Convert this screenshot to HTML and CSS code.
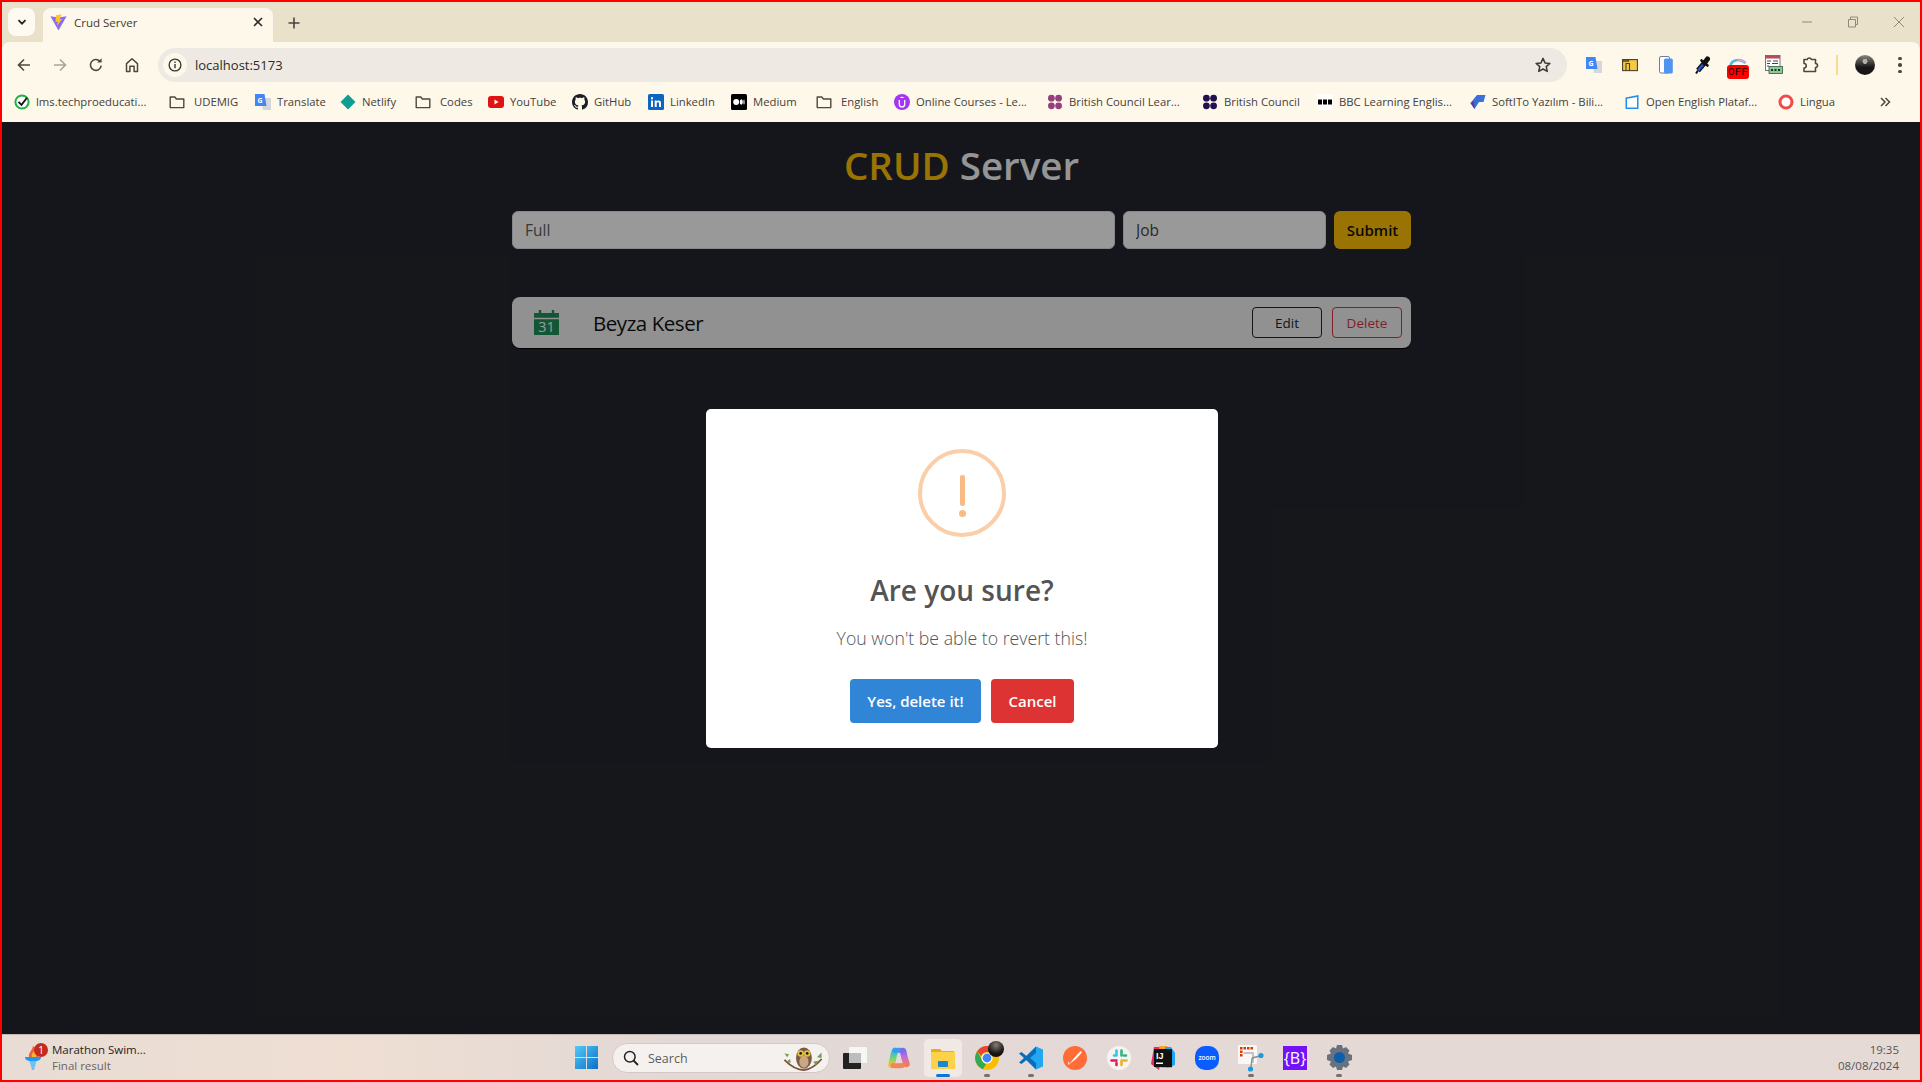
FILE: index.html
```html
<!DOCTYPE html>
<html lang="en">
<head>
<meta charset="UTF-8">
<title>Crud Server</title>
<link rel="stylesheet" href="styles.css">
</head>
<body>
<svg class="defs" width="0" height="0">
    <symbol id="folder" viewBox="0 0 16 16"><path d="M1.2 3h4.6l1.6 2h7.4v8.6H1.2z" fill="none" stroke="#4d483f" stroke-width="1.4" stroke-linejoin="round"/></symbol>
    <symbol id="dots4" viewBox="0 0 16 16"><circle cx="4.4" cy="4.2" r="3.4"/><circle cx="11.6" cy="4.2" r="3.4"/><circle cx="4.4" cy="11.8" r="3.4"/><circle cx="11.6" cy="11.8" r="3.4"/></symbol>
</svg>
<div class="frame">
    <div class="tabstrip">
        <div class="tab-search"><svg width="12" height="12" viewBox="0 0 12 12"><path d="M2.5 4.2 6 7.7l3.5-3.5" fill="none" stroke="#222" stroke-width="1.8"/></svg></div>
        <div class="tab">
            <svg class="tab-icon" width="17" height="17" viewBox="0 0 17 17"><path d="M.4 2.2 8.5 16.4 16.6 2.2l-8 1.4z" fill="#8b6cf6"/><path d="M11.5.3 6 1.3 5.6 8l2.2-.5-.5 4.5L12 4.8l-2.4.4z" fill="#ffc41f"/></svg>
            <span class="tab-title">Crud Server</span>
            <svg class="tab-close" width="12" height="12" viewBox="0 0 12 12"><path d="m2 2 8 8M10 2l-8 8" stroke="#2a2a2a" stroke-width="1.6"/></svg>
        </div>
        <svg class="new-tab" width="14" height="14" viewBox="0 0 14 14"><path d="M7 1.5v11M1.5 7h11" stroke="#4a463c" stroke-width="1.6"/></svg>
        <div class="window-controls">
            <svg width="12" height="12" viewBox="0 0 12 12"><path d="M1 6h10" stroke="#8f8a7c" stroke-width="1"/></svg>
            <svg width="12" height="12" viewBox="0 0 12 12"><path d="M1.5 3.5h7V11h-7zM3.5 3.5V1h7v7.5h-2" fill="none" stroke="#8f8a7c" stroke-width="1"/></svg>
            <svg width="12" height="12" viewBox="0 0 12 12"><path d="m1 1 10 10M11 1 1 11" stroke="#8f8a7c" stroke-width="1"/></svg>
        </div>
    </div>

    <div class="toolbar">
        <div class="nav-btn"><svg width="16" height="16" viewBox="0 0 16 16"><path d="M14 8H2.5M8 2.5 2.5 8 8 13.5" fill="none" stroke="#4d483f" stroke-width="1.6"/></svg></div>
        <div class="nav-btn"><svg width="16" height="16" viewBox="0 0 16 16"><path d="M2 8h11.5M8 2.5 13.5 8 8 13.5" fill="none" stroke="#a9a597" stroke-width="1.6"/></svg></div>
        <div class="nav-btn"><svg width="16" height="16" viewBox="0 0 16 16"><path d="M13.2 8.6a5.4 5.4 0 1 1-1.3-4.2" fill="none" stroke="#4d483f" stroke-width="1.6"/><path d="M13.6 1.2v4.4H9.2z" fill="#4d483f"/></svg></div>
        <div class="nav-btn"><svg width="16" height="16" viewBox="0 0 16 16"><path d="M2.5 14.5V6.6L8 1.8l5.5 4.8v7.9h-3.4V9.2H5.9v5.3z" fill="none" stroke="#4d483f" stroke-width="1.5" stroke-linejoin="round"/></svg></div>
        <div class="omnibox">
            <span class="site-info"><svg width="14" height="14" viewBox="0 0 14 14"><circle cx="7" cy="7" r="5.9" fill="none" stroke="#333" stroke-width="1.3"/><path d="M7 6v4.2M7 3.6v1.3" stroke="#333" stroke-width="1.4"/></svg></span>
            <span class="url">localhost:5173</span>
            <svg class="star" width="16" height="16" viewBox="0 0 16 16"><path d="m8 1.4 2 4.5 4.9.5-3.7 3.2 1.1 4.8L8 12l-4.3 2.4 1.1-4.8-3.7-3.2L6 5.9z" fill="none" stroke="#3c3a33" stroke-width="1.5" stroke-linejoin="round"/></svg>
        </div>
        <div class="ext-btn"><svg width="16" height="16" viewBox="0 0 16 16"><path d="M6 4h10v12H8z" fill="#d5d7d8"/><path d="M0 0h9.5l2 12H0z" fill="#4285f4"/><text x="5" y="8.5" class="gtrans-text">G</text></svg></div>
        <div class="ext-btn"><svg width="16" height="14" viewBox="0 0 16 14"><rect x=".6" y="1.6" width="14.8" height="11" fill="#f6c945" stroke="#4a4030" stroke-width="1.1"/><path d="M.6 1.6h6v1.5h-6zM4 12.5v-7h3.5v7" fill="none" stroke="#4a4030" stroke-width="1.1"/></svg></div>
        <div class="ext-btn"><svg width="14" height="18" viewBox="0 0 14 18"><rect x=".5" y=".5" width="10" height="16.5" rx="1.5" fill="#fff" stroke="#5f6f8c" stroke-width=".9"/><rect x="5" y="2.5" width="8.8" height="15" rx="1.5" fill="#4f94ef"/></svg></div>
        <div class="ext-btn"><svg width="15" height="18" viewBox="0 0 15 18"><path d="M9 7.5 3 14.5" stroke="#111" stroke-width="5"/><path d="M9 7.5 3 14.5" stroke="#2a55c8" stroke-width="2.6"/><path d="M3 14.5 1 17.5" stroke="#111" stroke-width="2"/><path d="m6.5 4.5 6 5" stroke="#111" stroke-width="2.6" stroke-linecap="round"/><path d="m9.5 7 3-4" stroke="#111" stroke-width="5" stroke-linecap="round"/></svg></div>
        <div class="ext-btn ext-off">
            <svg class="ext-off-arc" width="18" height="7" viewBox="0 0 18 7"><path d="M1.5 7C3 2 10 0 16.5 5" fill="none" stroke="#5ab4e0" stroke-width="2.4"/><path d="M9 2c3-.6 5.5.5 7.5 3" fill="none" stroke="#c9a8d8" stroke-width="2.4"/></svg>
            <span class="off-badge">OFF</span>
        </div>
        <div class="ext-btn"><svg width="18" height="20" viewBox="0 0 18 20"><rect x=".5" y=".5" width="14.5" height="15" fill="#fff" stroke="#555" stroke-width=".8"/><rect x=".5" y=".5" width="14.5" height="3" fill="#b84a5c"/><path d="M2 6h4M8 6h5M2 8.5h3M7 8.5h6M2 11h2" stroke="#444" stroke-width="1"/><rect x="4" y="11.5" width="13.5" height="7" fill="#8fc79a" stroke="#2f5a3a" stroke-width=".8"/><path d="M6 15h2M9.5 15h2M13 15h2" stroke="#1e3a25" stroke-width="2"/></svg></div>
        <div class="ext-btn"><svg width="18" height="18" viewBox="0 0 18 18"><path d="M3 3.5h3.2a2.2 2.2 0 0 1 4.2 0h4.1v4a2 2 0 0 1 0 4v4H3V12a2.200 2.200 0 0 0 0-4.500z" fill="none" stroke="#4d483f" stroke-width="1.6" stroke-linejoin="round"/></svg></div>
        <span class="toolbar-divider"></span>
        <span class="avatar"></span>
        <div class="menu-dots"><i></i><i></i><i></i></div>
    </div>

    <div class="bookmarks">
        <span class="bm"><svg width="16" height="16" viewBox="0 0 16 16"><circle cx="8" cy="8" r="6.6" fill="#fff" stroke="#1fb141" stroke-width="2"/><path d="m4.5 7.8 3 3 5.5-7" fill="none" stroke="#111" stroke-width="1.8"/></svg>lms.techproeducati...</span>
        <span class="bm bm-folder"><svg width="16" height="16"><use href="#folder"/></svg>UDEMIG</span>
        <span class="bm"><svg width="16" height="16" viewBox="0 0 16 16"><path d="M6 4h10v12H8z" fill="#d5d7d8"/><path d="M0 0h9.5l2 12H0z" fill="#4285f4"/><text x="5" y="8.5" class="gtrans-text">G</text></svg>Translate</span>
        <span class="bm"><svg width="16" height="16" viewBox="0 0 16 16"><path d="M8 .5 15.5 8 8 15.5.5 8z" fill="#0f9d92"/></svg>Netlify</span>
        <span class="bm bm-folder"><svg width="16" height="16"><use href="#folder"/></svg>Codes</span>
        <span class="bm"><svg width="16" height="16" viewBox="0 0 16 16"><rect y="2" width="16" height="12" rx="3" fill="#e01313"/><path d="m6.5 5.5 4 2.5-4 2.5z" fill="#fff"/></svg>YouTube</span>
        <span class="bm"><svg width="16" height="16" viewBox="0 0 16 16"><path d="M8 0C3.58 0 0 3.58 0 8c0 3.54 2.29 6.53 5.47 7.59.4.07.55-.17.55-.38 0-.19-.01-.82-.01-1.49-2.01.37-2.53-.49-2.69-.94-.09-.23-.48-.94-.82-1.13-.28-.15-.68-.52-.01-.53.63-.01 1.08.58 1.23.82.72 1.21 1.87.87 2.33.66.07-.52.28-.87.51-1.07-1.78-.2-3.64-.89-3.64-3.95 0-.87.31-1.59.82-2.15-.08-.2-.36-1.02.08-2.12 0 0 .67-.21 2.2.82.64-.18 1.32-.27 2-.27.68 0 1.36.09 2 .27 1.53-1.04 2.2-.82 2.2-.82.44 1.1.16 1.92.08 2.12.51.56.82 1.27.82 2.15 0 3.07-1.87 3.75-3.65 3.95.29.25.54.73.54 1.48 0 1.07-.01 1.93-.01 2.2 0 .21.15.46.55.38A8.013 8.013 0 0016 8c0-4.42-3.58-8-8-8z" fill="#1b1f23"/></svg>GitHub</span>
        <span class="bm"><svg width="16" height="16" viewBox="0 0 16 16"><rect width="16" height="16" rx="1.5" fill="#0a66c2"/><path d="M3 6.500h2V13H3zM3 3.200h2v2H3zM6.700 6.500h1.900v.9c.9-1.400 4.400-1.700 4.400 1.500V13h-2V9.500c0-1.700-2.300-1.500-2.300 0V13h-2z" fill="#fff"/></svg>LinkedIn</span>
        <span class="bm"><svg width="16" height="16" viewBox="0 0 16 16"><rect width="16" height="16" rx="1.5" fill="#000"/><circle cx="5.2" cy="8" r="3" fill="#fff"/><ellipse cx="10.3" cy="8" rx="1.5" ry="2.8" fill="#fff"/><ellipse cx="13" cy="8" rx=".6" ry="2.5" fill="#fff"/></svg>Medium</span>
        <span class="bm bm-folder"><svg width="16" height="16"><use href="#folder"/></svg>English</span>
        <span class="bm"><svg width="16" height="16" viewBox="0 0 16 16"><circle cx="8" cy="8" r="8" fill="#a435f0"/><path d="M5.3 6v4.2a2.700 2.700 0 0 0 5.400 0V6" fill="none" stroke="#fff" stroke-width="1.3"/><path d="M8 2.500 10.500 4h-5z" fill="#fff"/></svg>Online Courses - Le...</span>
        <span class="bm"><svg class="bc-light" width="16" height="16"><use href="#dots4"/></svg>British Council Lear...</span>
        <span class="bm"><svg class="bc-dark" width="16" height="16"><use href="#dots4"/></svg>British Council</span>
        <span class="bm"><svg width="16" height="16" viewBox="0 0 16 16"><rect width="16" height="16" fill="#fff"/><path d="M1 5.500h4v5H1zM6 5.500h4v5H6zM11 5.500h4v5h-4z" fill="#000"/></svg>BBC Learning Englis...</span>
        <span class="bm"><svg width="16" height="16" viewBox="0 0 16 16"><path d="M.5 9 7 1h8.500l-2 7H9l-4.500 7z" fill="#3d6fd8"/><path d="M.5 9 4 7l.5 8z" fill="#5a3aa0"/></svg>SoftITo Yazılım - Bili...</span>
        <span class="bm"><svg width="16" height="16" viewBox="0 0 16 16"><path d="M1.500 3.500 14.500 1v14h-13z" fill="#1e8ef0"/><path d="M3 4.800 13 3v10.500H3z" fill="#fff"/></svg>Open English Plataf...</span>
        <span class="bm"><svg width="16" height="16" viewBox="0 0 16 16"><circle cx="8" cy="8" r="6" fill="#fff" stroke="#ef4b4b" stroke-width="3"/></svg>Lingua</span>
        <svg class="bm-more" width="12" height="12" viewBox="0 0 12 12"><path d="m2 2 4 4-4 4M6.500 2l4 4-4 4" fill="none" stroke="#4d483f" stroke-width="1.5"/></svg>
    </div>

    <main class="page">
        <div class="container">
            <h1 class="app-title"><span class="title-accent">CRUD</span> Server</h1>
            <form class="add-form">
                <input class="field field-name" type="text" placeholder="Full">
                <input class="field field-job" type="text" placeholder="Job">
                <button class="btn-submit" type="button">Submit</button>
            </form>
            <div class="item">
                <svg class="item-icon" width="25" height="25" viewBox="0 0 26 26"><path d="M0 3h5V0h2.500v3h11V0H21v3h5v5H0zM0 9.500h26V26H0z" fill="#1f8f5a"/><text x="13" y="23" class="item-icon-text">31</text></svg>
                <span class="item-name">Beyza Keser</span>
                <button class="btn-line btn-edit" type="button">Edit</button>
                <button class="btn-line btn-delete" type="button">Delete</button>
            </div>
        </div>

        <div class="overlay">
            <div class="dialog">
                <div class="dialog-icon"><span class="mark-line"></span><span class="mark-dot"></span></div>
                <h2 class="dialog-title">Are you sure?</h2>
                <p class="dialog-text">You won't be able to revert this!</p>
                <div class="dialog-actions">
                    <button class="btn-confirm" type="button">Yes, delete it!</button>
                    <button class="btn-cancel" type="button">Cancel</button>
                </div>
            </div>
        </div>
    </main>

    <div class="taskbar">
        <div class="widget">
            <div class="widget-icon">
                <svg width="16" height="24" viewBox="0 0 16 24"><path d="M4 11C3 7 7 5 8 0c3 2 6 6 5 11z" fill="#f0613a"/><path d="M7 11c-1-3 1-4 2-6 2 2 3 4 2 6z" fill="#f9b233"/><path d="M0 11h16c0 3-3 4-5 4H5c-2 0-5-1-5-4z" fill="#1e9bf0"/><path d="M4.500 15h7L9 24H7z" fill="#6fc1f5"/></svg>
                <span class="widget-badge">1</span>
            </div>
            <div class="widget-text">
                <span class="widget-title">Marathon Swim...</span>
                <span class="widget-sub">Final result</span>
            </div>
        </div>
        <div class="start"><svg width="23" height="23" viewBox="0 0 23 23"><defs><linearGradient id="winblue" x1="0" y1="0" x2="1" y2="1"><stop offset="0" stop-color="#52c9f8"/><stop offset="1" stop-color="#0a6fc9"/></linearGradient></defs><path d="M0 0h11v11H0zM12 0h11v11H12zM0 12h11v11H0zM12 12h11v11H12z" fill="url(#winblue)"/></svg></div>
        <div class="search">
            <svg width="16" height="16" viewBox="0 0 16 16"><circle cx="6.8" cy="6.8" r="5.3" fill="none" stroke="#222" stroke-width="1.5"/><path d="m10.500 10.500 4.500 4.500" stroke="#222" stroke-width="1.8"/></svg>
            <span class="search-label">Search</span>
            <svg class="search-owl" width="44" height="26" viewBox="0 0 46 28"><path d="M3 15c8 8 14 11 21 11 8-1 14-6 19-12" fill="none" stroke="#7a5238" stroke-width="2"/><path d="M6 12 3 8l5 1zM10 18l-5-1 4-3zM38 12l5-5v6zM34 17l5-1-2 5z" fill="#6ea24c"/><ellipse cx="24" cy="13" rx="8.5" ry="11.5" fill="#7a5a42"/><ellipse cx="24" cy="17" rx="5" ry="6.5" fill="#c9a684"/><circle cx="20.5" cy="8" r="3.5" fill="#e5c23c"/><circle cx="27.5" cy="8" r="3.5" fill="#e5c23c"/><circle cx="20.5" cy="8" r="1.5" fill="#222"/><circle cx="27.5" cy="8" r="1.5" fill="#222"/></svg>
        </div>
        <div class="tb-app"><svg width="24" height="22" viewBox="0 0 24 22"><rect x="6" width="18" height="16" rx="1" fill="#f6f6f6"/><rect y="6" width="18" height="16" rx="1" fill="#222"/><rect x="6" y="6" width="12" height="10" fill="#bdbdbd"/></svg></div>
        <div class="tb-app"><svg width="22" height="22" viewBox="0 0 22 22"><defs><linearGradient id="copA" x1="0" y1="0" x2="0" y2="1"><stop offset="0" stop-color="#2fb6f0"/><stop offset=".55" stop-color="#7ad66a"/><stop offset="1" stop-color="#f5c13c"/></linearGradient><linearGradient id="copB" x1="0" y1="0" x2="0" y2="1"><stop offset="0" stop-color="#7a6bf0"/><stop offset=".5" stop-color="#c86bd8"/><stop offset="1" stop-color="#f27a5c"/></linearGradient></defs><path d="M7 4C5 8 5 14 3.500 18" fill="none" stroke="url(#copA)" stroke-width="6.5" stroke-linecap="round"/><path d="M7 3.500c2-.3 5-.3 7 0" fill="none" stroke="#3a9bf0" stroke-width="5" stroke-linecap="round"/><path d="M15 4c1 5 2 9 3.500 13" fill="none" stroke="url(#copB)" stroke-width="6.5" stroke-linecap="round"/><path d="M5 18.500c3 .3 6 .3 9 0" fill="none" stroke="#f2855c" stroke-width="5" stroke-linecap="round"/></svg></div>
        <div class="tb-app tb-active running-blue"><svg width="24" height="22" viewBox="0 0 24 22"><path d="M0 3a1 1 0 0 1 1-1h8l2 2h12v17H0z" fill="#e8ad1c"/><path d="M0 5h24v17H0z" fill="#fbd24a"/><rect x="7" y="14" width="10" height="6" rx="1" fill="#1b86d6"/></svg></div>
        <div class="tb-app running">
            <svg width="24" height="24" viewBox="0 0 24 24"><circle cx="12" cy="12" r="12" fill="#fbbc04"/><path d="M12 0a12 12 0 0 1 10.400 6H12a6 6 0 0 0-5.700 4.200L2.300 5.100A12 12 0 0 1 12 0z" fill="#ea4335"/><path d="M2.300 5.100 7.200 14.500A6 6 0 0 0 11 17.900L8 23.300A12 12 0 0 1 2.300 5.100z" fill="#34a853"/><circle cx="12" cy="12" r="5.6" fill="#fff"/><circle cx="12" cy="12" r="4.4" fill="#4285f4"/></svg>
            <span class="chrome-badge"></span>
        </div>
        <div class="tb-app running"><svg width="24" height="24" viewBox="0 0 24 24"><path d="M17 .5 24 3.500v17L17 23.500 5 12z" fill="#22a7f0"/><path d="M17 .5 7.500 10l-5-4L0 7.500 5 12 0 16.500 2.500 18l5-4 9.500 9.500V17l-6-5 6-5z" fill="#0a6db8"/></svg></div>
        <div class="tb-app"><svg width="24" height="24" viewBox="0 0 24 24"><circle cx="12" cy="12" r="12" fill="#ff6c37"/><path d="M6 18.500 12 11l5-5.500c1-.8 2.200.3 1.500 1.400l-5 5.600z" fill="#fff"/><path d="M6 18.500 5.500 16" stroke="#fff" stroke-width="1"/></svg></div>
        <div class="tb-app"><svg width="24" height="24" viewBox="0 0 24 24"><circle cx="12" cy="12" r="12" fill="#f6f3f1"/><path d="M9.500 4.500v5M7 9.500h2.500" stroke="#36c5f0" stroke-width="2.6" stroke-linecap="round"/><path d="M14.500 4.500v5M19 9.500h-2" stroke="#2eb67d" stroke-width="2.6" stroke-linecap="round"/><path d="M9.500 14.500h-5M9.500 17v2" stroke="#e01e5a" stroke-width="2.6" stroke-linecap="round"/><path d="M14.500 14.500h5M14.500 14.500V19" stroke="#ecb22e" stroke-width="2.6" stroke-linecap="round"/></svg></div>
        <div class="tb-app"><svg width="24" height="24" viewBox="0 0 24 24"><path d="M3 1h10L8 24l-8-6z" fill="#f0265f"/><path d="M8 0h8l8 8-3 14H10z" fill="#f9a12e"/><path d="M14 1h6l4 6v12l-8 3z" fill="#1aa6f0"/><rect x="3" y="3" width="18" height="18" fill="#111"/><text x="5" y="13" class="ij-text">IJ</text><rect x="5" y="16.5" width="7" height="1.5" fill="#fff"/></svg></div>
        <div class="tb-app"><svg width="24" height="24" viewBox="0 0 24 24"><rect width="24" height="24" rx="10" fill="#0b5cff"/><text x="12" y="14" class="zoom-text">zoom</text></svg></div>
        <div class="tb-app running"><svg width="26" height="28" viewBox="0 0 26 28"><rect y="1" width="19" height="19" rx="1.5" fill="#f8f8f8"/><path d="M2 3h2.500v2.500H2zM5.500 3H8v2.500H5.500zM9 3h2.500v2.500H9zM12.500 3H15v2.500h-2.500zM2 6.500h2.500V9H2zM2 10h2.500v2.500H2z" fill="#d83b01"/><path d="M5.500 9H15v10" fill="none" stroke="#c4c4c4" stroke-width="2"/><path d="m14 14 8-2M14 14l-1 9" stroke="#8a8a8a" stroke-width="1.3"/><circle cx="23" cy="11.5" r="2.6" fill="#1a9bdf"/><circle cx="12.5" cy="25" r="2.6" fill="#1a9bdf"/></svg></div>
        <div class="tb-app"><svg width="24" height="24" viewBox="0 0 24 24"><rect width="24" height="24" fill="#7510f7"/><text x="12" y="17.500" class="bs-text">{B}</text></svg></div>
        <div class="tb-app running"><svg width="25" height="25" viewBox="0 0 25 25"><path d="M10 0h5l1 3.500 3-1.500 3.500 3.500L21 8.500l4 1.500v5l-4 1.500 1.500 3-3.500 3.500-3-1.500L15 25h-5l-1-3.500-3 1.500-3.500-3.500L4 16.500 0 15v-5l4-1.500-1.500-3L6 2l3 1.500z" fill="#68727e"/><circle cx="12.5" cy="12.5" r="5.5" fill="#0c5fa8"/></svg></div>
        <div class="clock">
            <span>19:35</span>
            <span>08/08/2024</span>
        </div>
    </div>
</div>
</body>
</html>
```

FILE: styles.css
```css
* {
    box-sizing: border-box;
}
html, body {
    margin: 0;
    height: 100%;
}
body {
    font-family: 'Open Sans', 'Noto Sans', sans-serif;
    overflow: hidden;
}
.defs {
    position: absolute;
}
.gtrans-text {
    font: bold 7px 'Open Sans', sans-serif;
    fill: #fff;
    text-anchor: middle;
}
.frame {
    width: 1922px;
    height: 1082px;
    border: 2px solid #f00;
    display: flex;
    flex-direction: column;
    background: #e9e1c9;
}

/* tabs */
.tabstrip {
    height: 40px;
    flex: none;
    display: flex;
    align-items: flex-start;
    padding: 6px 0 0 6px;
}
.tab-search {
    width: 27px;
    height: 28px;
    background: #fffaf1;
    border-radius: 8px;
    display: flex;
    align-items: center;
    justify-content: center;
}
.tab {
    width: 230px;
    height: 34px;
    margin-left: 8px;
    background: #fef8ea;
    border-radius: 8px 8px 0 0;
    display: flex;
    align-items: center;
    padding: 0 9px 6px 7px;
    position: relative;
    z-index: 1;
}
.tab-title {
    margin-left: 7px;
    font-size: 11.5px;
    color: #3d3a33;
    flex: 1;
}
.new-tab {
    margin: 8px 0 0 14px;
}
.window-controls {
    margin-left: auto;
    display: flex;
    gap: 34px;
    padding: 8px 15px 0 0;
}

/* toolbar */
.toolbar {
    height: 40px;
    flex: none;
    background: #fef8ea;
    border-radius: 8px 8px 0 0;
    display: flex;
    align-items: center;
    padding: 6px 0 0 4px;
}
.nav-btn {
    width: 36px;
    display: flex;
    justify-content: center;
}
.omnibox {
    width: 1409px;
    height: 34px;
    margin: 0 9px 0 8px;
    background: #eeeae3;
    border-radius: 17px;
    display: flex;
    align-items: center;
    padding: 0 16px 0 5px;
}
.site-info {
    width: 24px;
    height: 24px;
    border-radius: 50%;
    background: #fef8ea;
    display: flex;
    align-items: center;
    justify-content: center;
}
.url {
    margin-left: 8px;
    font-size: 13px;
    color: #2b2a26;
    flex: 1;
}
.ext-btn {
    width: 36px;
    height: 30px;
    display: flex;
    align-items: center;
    justify-content: center;
    position: relative;
}
.ext-off {
    flex-direction: column;
    padding-top: 7px;
}
.off-badge {
    width: 22px;
    height: 14px;
    background: #f00;
    border-radius: 3px;
    color: #2a0000;
    font: 11px/14px 'Liberation Mono', monospace;
    text-align: center;
}
.toolbar-divider {
    width: 2px;
    height: 20px;
    margin-left: 8px;
    background: #f6dc8b;
}
.avatar {
    width: 20px;
    height: 20px;
    margin-left: 17px;
    border-radius: 50%;
    background: radial-gradient(circle at 50% 32%, #b9aea6 14%, transparent 16%), linear-gradient(#8a8580, #171717 62%);
}
.menu-dots {
    width: 36px;
    margin-left: 7px;
    display: flex;
    flex-direction: column;
    align-items: center;
    gap: 3px;
}
.menu-dots i {
    width: 3.5px;
    height: 3.5px;
    border-radius: 50%;
    background: #4d483f;
}

/* bookmarks */
.bookmarks {
    height: 40px;
    flex: none;
    background: #fef8ea;
    display: grid;
    grid-template-columns: 155px 86px 85px 75px 73px 84px 76px 83px 85px 78px 153px 155px 115px 153px 154px 154px 101px 12px;
    align-items: center;
    padding: 0 0 1px 12px;
}
.bm {
    display: flex;
    align-items: center;
    gap: 6px;
    font-size: 11.3px;
    color: #44403a;
    white-space: nowrap;
}
.bm-folder {
    gap: 9px;
}
.bm svg {
    flex: none;
}
.bc-light {
    fill: #93407c;
}
.bc-dark {
    fill: #23114f;
}

/* app */
.page {
    flex: 1;
    position: relative;
    background: #23262d;
    padding-left: 1px;
}
.container {
    width: 899px;
    margin: 0 auto;
    padding-top: 18px;
}
.app-title {
    margin: 0;
    font-size: 38.5px;
    line-height: 50px;
    font-weight: 600;
    text-align: center;
    color: #f8f9fa;
}
.title-accent {
    color: #ffc107;
}
.add-form {
    display: flex;
    gap: 8px;
    margin-top: 21px;
}
.field {
    height: 38px;
    border: 1px solid #dee2e6;
    border-radius: 6px;
    background: #fff;
    padding: 0 12px;
    font: 15.5px 'Open Sans', sans-serif;
    min-width: 0;
}
.field::placeholder {
    color: #5c5c5c;
    opacity: 1;
}
.field-name {
    width: 603px;
}
.field-job {
    width: 203px;
}
.field-job::placeholder {
    color: #444;
}
.btn-submit {
    width: 77px;
    height: 38px;
    border: none;
    border-radius: 6px;
    background: #ffc107;
    color: #111;
    font: 600 15px 'Open Sans', sans-serif;
    padding: 0;
}
.item {
    height: 51px;
    margin-top: 48px;
    display: flex;
    align-items: center;
    background: #f2f2f2;
    border-radius: 8px;
    padding: 0 9px 0 22px;
    box-shadow: 0 1px 0 #000;
}
.item-icon-text {
    font: 15px 'Open Sans', sans-serif;
    fill: #fff;
    text-anchor: middle;
}
.item-name {
    margin-left: 34px;
    padding-top: 1px;
    font-size: 20.5px;
    letter-spacing: -.45px;
    color: #111;
    flex: 1;
}
.btn-line {
    height: 31px;
    background: transparent;
    border: 1px solid;
    border-radius: 4px;
    font: 13.5px 'Open Sans', sans-serif;
    padding: 0;
}
.btn-edit {
    width: 70px;
    border-color: #212529;
    color: #212529;
}
.btn-delete {
    width: 70px;
    margin-left: 10px;
    border-color: #dc3545;
    color: #dc3545;
}

/* confirm dialog */
.overlay {
    position: absolute;
    inset: 0;
    background: rgba(0, 0, 0, .4);
    display: flex;
    align-items: center;
    justify-content: center;
    padding-left: 2px;
}
.dialog {
    width: 512px;
    height: 339px;
    background: #fff;
    border-radius: 5px;
    padding-top: 40px;
    display: flex;
    flex-direction: column;
    align-items: center;
    color: #545454;
}
.dialog-icon {
    width: 88px;
    height: 88px;
    border: 4px solid #facea8;
    border-radius: 50%;
    display: flex;
    flex-direction: column;
    align-items: center;
    padding-top: 22px;
}
.mark-line {
    width: 5px;
    height: 31px;
    background: #f8bb86;
    border-radius: 2px;
}
.mark-dot {
    width: 7px;
    height: 7px;
    margin-top: 4px;
    background: #f8bb86;
    border-radius: 50%;
}
.dialog-title {
    margin: 33px 0 0;
    font-size: 28px;
    line-height: 41px;
    font-weight: 600;
}
.dialog-text {
    margin: 15px 0 0;
    font-size: 17.7px;
    line-height: 24px;
    font-weight: 300;
}
.dialog-actions {
    display: flex;
    gap: 10px;
    margin-top: 29px;
}
.btn-confirm, .btn-cancel {
    height: 44px;
    border: none;
    border-radius: 4px;
    color: #fff;
    font: 600 15px 'Open Sans', sans-serif;
    padding: 0;
}
.btn-confirm {
    width: 131px;
    background: #3085d6;
}
.btn-cancel {
    width: 83px;
    background: #dd3333;
}

/* taskbar */
.taskbar {
    height: 46px;
    flex: none;
    display: flex;
    align-items: center;
    background: linear-gradient(90deg, #e8dcd4, #efdfd3 18%, #e2d8d5 35%, #e6dad5 100%);
    border-top: 1px solid #c4b9b3;
}
.widget {
    width: 539px;
    margin-left: 23px;
    display: flex;
    align-items: center;
    gap: 11px;
}
.widget-icon {
    position: relative;
    height: 24px;
}
.widget-badge {
    position: absolute;
    top: -3px;
    left: 9px;
    width: 14px;
    height: 14px;
    border-radius: 50%;
    background: #c42b1c;
    color: #fff;
    font-size: 10px;
    line-height: 14px;
    text-align: center;
}
.widget-text {
    display: flex;
    flex-direction: column;
    font-size: 11.5px;
    line-height: 16px;
}
.widget-title {
    color: #1e1e1e;
}
.widget-sub {
    color: #666;
}
.start {
    width: 44px;
    display: flex;
    justify-content: center;
}
.search {
    width: 218px;
    height: 30px;
    margin-left: 4px;
    background: #f5f1ef;
    border: 1px solid #d3cac6;
    border-radius: 15px;
    display: flex;
    align-items: center;
    padding-left: 10px;
    position: relative;
}
.search-label {
    margin-left: 9px;
    font-size: 12.5px;
    color: #5c5c5c;
    padding-top: 1px;
}
.search-owl {
    position: absolute;
    right: 4px;
    top: 2px;
}
.search + .tb-app {
    margin-left: 3px;
}
.tb-app {
    width: 44px;
    height: 45px;
    display: flex;
    align-items: center;
    justify-content: center;
    position: relative;
}
.tb-active::before {
    content: "";
    position: absolute;
    left: 3px;
    top: 4px;
    width: 38px;
    height: 38px;
    background: #f1e9e6;
    border-radius: 5px;
}
.tb-active svg {
    position: relative;
}
.running::after, .running-blue::after {
    content: "";
    position: absolute;
    left: 19px;
    bottom: 3px;
    width: 6px;
    height: 3px;
    border-radius: 2px;
    background: #77706d;
}
.running-blue::after {
    left: 15px;
    width: 14px;
    background: #0a78d4;
}
.chrome-badge {
    position: absolute;
    top: 6px;
    right: 5px;
    width: 16px;
    height: 16px;
    border-radius: 50%;
    background: radial-gradient(circle at 50% 25%, #8b7a72, #161616 60%);
}
.ij-text {
    font: bold 9px 'Liberation Sans', sans-serif;
    fill: #fff;
}
.zoom-text {
    font: 600 6.5px 'Open Sans', sans-serif;
    fill: #fff;
    text-anchor: middle;
}
.bs-text {
    font: 16px 'Open Sans', sans-serif;
    fill: #fff;
    text-anchor: middle;
}
.clock {
    margin-left: auto;
    padding-right: 21px;
    display: flex;
    flex-direction: column;
    align-items: flex-end;
    font-size: 11.5px;
    line-height: 16px;
    color: #555;
}
```
